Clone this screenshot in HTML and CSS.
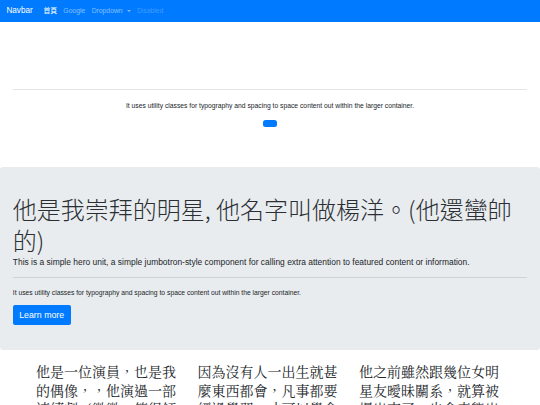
FILE: index.html
```html
<!DOCTYPE html>
<html lang="zh-Hant">
<head>
<meta charset="utf-8">
<title>Jumbotron</title>
<link rel="stylesheet" href="styles.css">
</head>
<body>
<nav class="navbar">
  <a class="brand" href="#">Navbar</a>
  <ul class="nav">
    <li><a class="nav-link active" href="#">首頁</a></li>
    <li><a class="nav-link" href="#">Google</a></li>
    <li><a class="nav-link" href="#">Dropdown <span class="caret"></span></a></li>
    <li><a class="nav-link disabled" href="#">Disabled</a></li>
  </ul>
</nav>

<section class="intro">
  <hr class="divider">
  <p class="small-text">It uses utility classes for typography and spacing to space content out within the larger container.</p>
  <div class="center"><a class="btn-empty" href="#"></a></div>
</section>

<section class="jumbotron">
  <h1 class="display">他是我崇拜的明星, 他名字叫做楊洋。(他還蠻帥的)</h1>
  <p class="lead">This is a simple hero unit, a simple jumbotron-style component for calling extra attention to featured content or information.</p>
  <hr class="divider inner">
  <p class="small-text left">It uses utility classes for typography and spacing to space content out within the larger container.</p>
  <a class="btn-lg" href="#">Learn more</a>
</section>

<section class="columns">
  <p class="col">他是一位演員，也是我的偶像，，他演過一部連續劇（微微一笑很傾城），非常好看。</p>
  <p class="col">因為沒有人一出生就甚麼東西都會，凡事都要經過學習，才可以學會更多的東西。</p>
  <p class="col">他之前雖然跟幾位女明星友曖昧關系，就算被爆出來了，也會表態出來澄清。</p>
</section>
</body>
</html>
```

FILE: styles.css
```css
html, body {
  margin: 0;
  padding: 0;
}

body {
  font-family: "Liberation Sans", Arial, "Noto Sans CJK TC", sans-serif;
  color: #212529;
  background: #fff;
}

a {
  text-decoration: none;
}

.navbar {
  display: flex;
  align-items: center;
  height: 22px;
  padding: 0 6.4px;
  background: #007bff;
}

.brand {
  color: #fff;
  font-size: 8.2px;
  line-height: 12px;
  margin-right: 7.4px;
}

.nav {
  display: flex;
  list-style: none;
  margin: 0;
  padding: 0;
}

.nav-link {
  display: block;
  padding: 0 3.2px;
  font-size: 6.8px;
  line-height: 9.6px;
  color: rgba(255, 255, 255, 0.5);
}

.nav-link.active {
  color: #fff;
}

.nav-link.disabled {
  color: rgba(255, 255, 255, 0.25);
}

.caret {
  display: inline-block;
  width: 0;
  height: 0;
  margin-left: 2px;
  vertical-align: 1px;
  border-top: 2px solid rgba(255, 255, 255, 0.5);
  border-left: 2px solid transparent;
  border-right: 2px solid transparent;
}

.intro {
  height: 145px;
  padding-top: 67px;
  box-sizing: border-box;
}

.divider {
  margin: 0 13px;
  border: 0;
  border-top: 1px solid rgba(0, 0, 0, 0.1);
}

.divider.inner {
  margin: 9.6px 0;
}

.small-text {
  font-size: 6.75px;
  line-height: 9.6px;
  margin: 11px 0 0;
  text-align: center;
}

.small-text.left {
  text-align: left;
  margin: 0 0 6.4px;
}

.center {
  display: flex;
  justify-content: center;
  margin-top: 9px;
}

.btn-empty {
  display: block;
  width: 14px;
  height: 7px;
  border-radius: 2.5px;
  background: #007bff;
}

.jumbotron {
  background: #e9ecef;
  border-radius: 3px;
  padding: 25.6px 12.8px;
  margin-bottom: 12px;
}

.display {
  margin: 0 0 1px;
  font-family: "Noto Sans CJK TC", "Liberation Sans", sans-serif;
  font-size: 24px;
  line-height: 31px;
  font-weight: 300;
  color: #2b2f33;
}

.lead {
  margin: 0;
  font-size: 8.45px;
  line-height: 12px;
  font-weight: 300;
}

.btn-lg {
  display: inline-block;
  padding: 4px 6.4px;
  font-size: 8.8px;
  line-height: 12px;
  color: #fff;
  background: #007bff;
  border-radius: 2px;
}

.columns {
  display: flex;
  gap: 13.5px;
  padding-left: 36px;
}

.col {
  width: 148px;
  margin: 0;
  font-family: "Noto Serif CJK TC", "Noto Serif CJK SC", serif;
  font-size: 14px;
  line-height: 18.3px;
}
```
